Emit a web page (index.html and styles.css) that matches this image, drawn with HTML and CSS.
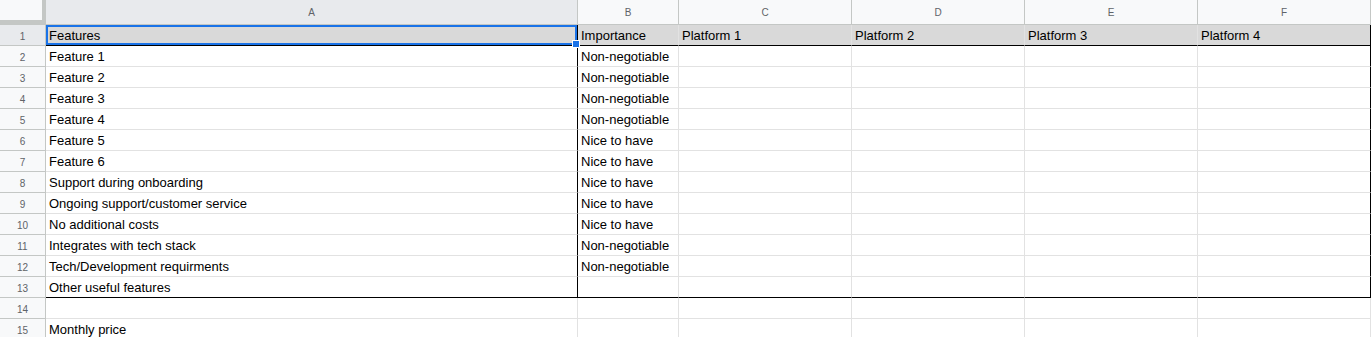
FILE: index.html
```html
<!DOCTYPE html>
<html lang="en">
<head>
    <meta charset="UTF-8">
    <meta name="viewport" content="width=device-width, initial-scale=1.0">
    <title>Platform comparison</title>
    <link rel="stylesheet" href="styles.css">
</head>
<body>
    <div class="sheet">
        <!-- column headers -->
        <div class="row head-row">
            <div class="corner"></div>
            <div class="col-hdr active">A</div>
            <div class="col-hdr">B</div>
            <div class="col-hdr">C</div>
            <div class="col-hdr">D</div>
            <div class="col-hdr">E</div>
            <div class="col-hdr">F</div>
        </div>

        <div class="row title-row">
            <div class="row-hdr active">1</div>
            <div class="cell col-a selected">Features<span class="sel-box"><span class="handle"></span></span></div>
            <div class="cell">Importance</div>
            <div class="cell">Platform 1</div>
            <div class="cell">Platform 2</div>
            <div class="cell">Platform 3</div>
            <div class="cell col-f">Platform 4</div>
        </div>
        <div class="row">
            <div class="row-hdr">2</div>
            <div class="cell col-a">Feature 1</div>
            <div class="cell">Non-negotiable</div>
            <div class="cell"></div><div class="cell"></div><div class="cell"></div>
            <div class="cell col-f"></div>
        </div>
        <div class="row">
            <div class="row-hdr">3</div>
            <div class="cell col-a">Feature 2</div>
            <div class="cell">Non-negotiable</div>
            <div class="cell"></div><div class="cell"></div><div class="cell"></div>
            <div class="cell col-f"></div>
        </div>
        <div class="row">
            <div class="row-hdr">4</div>
            <div class="cell col-a">Feature 3</div>
            <div class="cell">Non-negotiable</div>
            <div class="cell"></div><div class="cell"></div><div class="cell"></div>
            <div class="cell col-f"></div>
        </div>
        <div class="row">
            <div class="row-hdr">5</div>
            <div class="cell col-a">Feature 4</div>
            <div class="cell">Non-negotiable</div>
            <div class="cell"></div><div class="cell"></div><div class="cell"></div>
            <div class="cell col-f"></div>
        </div>
        <div class="row">
            <div class="row-hdr">6</div>
            <div class="cell col-a">Feature 5</div>
            <div class="cell">Nice to have</div>
            <div class="cell"></div><div class="cell"></div><div class="cell"></div>
            <div class="cell col-f"></div>
        </div>
        <div class="row">
            <div class="row-hdr">7</div>
            <div class="cell col-a">Feature 6</div>
            <div class="cell">Nice to have</div>
            <div class="cell"></div><div class="cell"></div><div class="cell"></div>
            <div class="cell col-f"></div>
        </div>
        <div class="row">
            <div class="row-hdr">8</div>
            <div class="cell col-a">Support during onboarding</div>
            <div class="cell">Nice to have</div>
            <div class="cell"></div><div class="cell"></div><div class="cell"></div>
            <div class="cell col-f"></div>
        </div>
        <div class="row">
            <div class="row-hdr">9</div>
            <div class="cell col-a">Ongoing support/customer service</div>
            <div class="cell">Nice to have</div>
            <div class="cell"></div><div class="cell"></div><div class="cell"></div>
            <div class="cell col-f"></div>
        </div>
        <div class="row">
            <div class="row-hdr">10</div>
            <div class="cell col-a">No additional costs</div>
            <div class="cell">Nice to have</div>
            <div class="cell"></div><div class="cell"></div><div class="cell"></div>
            <div class="cell col-f"></div>
        </div>
        <div class="row">
            <div class="row-hdr">11</div>
            <div class="cell col-a">Integrates with tech stack</div>
            <div class="cell">Non-negotiable</div>
            <div class="cell"></div><div class="cell"></div><div class="cell"></div>
            <div class="cell col-f"></div>
        </div>
        <div class="row">
            <div class="row-hdr">12</div>
            <div class="cell col-a">Tech/Development requirments</div>
            <div class="cell">Non-negotiable</div>
            <div class="cell"></div><div class="cell"></div><div class="cell"></div>
            <div class="cell col-f"></div>
        </div>
        <div class="row last-row">
            <div class="row-hdr">13</div>
            <div class="cell col-a">Other useful features</div>
            <div class="cell"></div>
            <div class="cell"></div><div class="cell"></div><div class="cell"></div>
            <div class="cell col-f"></div>
        </div>
        <div class="row">
            <div class="row-hdr">14</div>
            <div class="cell"></div><div class="cell"></div>
            <div class="cell"></div><div class="cell"></div><div class="cell"></div><div class="cell"></div>
        </div>
        <div class="row">
            <div class="row-hdr">15</div>
            <div class="cell">Monthly price</div>
            <div class="cell"></div>
            <div class="cell"></div><div class="cell"></div><div class="cell"></div><div class="cell"></div>
        </div>
    </div>
</body>
</html>
```

FILE: styles.css
```css
*, *::before, *::after {
    margin: 0;
    padding: 0;
    box-sizing: border-box;
}
body {
    background: #fff;
    overflow: hidden;
    font-family: "Liberation Sans", Arial, sans-serif;
    color: #000;
}
.sheet {
    width: 1371px;
}
.row {
    display: grid;
    grid-template-columns: 46px 532px 101px 173px 173px 173px 173px;
    grid-template-rows: 21px;
    height: 21px;
}
.head-row {
    grid-template-rows: 25px;
    height: 25px;
}

/* headers */
.corner {
    background: #f8f9fa;
    border-right: 4px solid #c4c7c5;
    border-bottom: 5px solid #c4c7c5;
}
.col-hdr {
    background: #f8f9fa;
    border-right: 1px solid #c4c7c5;
    border-bottom: 1px solid #c4c7c5;
    color: #5f6368;
    font-size: 10px;
    display: flex;
    align-items: center;
    justify-content: center;
}
.row-hdr {
    background: #f8f9fa;
    border-right: 1px solid #c4c7c5;
    border-bottom: 1px solid #c4c7c5;
    color: #5f6368;
    font-size: 10px;
    padding-top: 2px;
    display: flex;
    align-items: center;
    justify-content: center;
}
.col-hdr.active, .row-hdr.active {
    background: #e8eaed;
}

/* cells */
.cell {
    position: relative;
    border-right: 1px solid #e2e2e2;
    border-bottom: 1px solid #e2e2e2;
    font-size: 13px;
    line-height: 18px;
    padding: 2px 3px 0;
    white-space: nowrap;
}
.title-row .cell {
    background: #d9d9d9;
    border-bottom-color: #000;
}
.col-a, .col-f {
    border-right-color: #000;
}
.last-row .cell {
    border-bottom-color: #000;
}

/* selection on A1 */
.sel-box {
    position: absolute;
    z-index: 2;
    top: 0;
    left: 0;
    right: 0;
    bottom: 0;
    border: 2px solid #1a73e8;
}
.handle {
    position: absolute;
    right: -5px;
    bottom: -5px;
    width: 8px;
    height: 8px;
    background: #1a73e8;
    border: 1px solid #fff;
}
```
